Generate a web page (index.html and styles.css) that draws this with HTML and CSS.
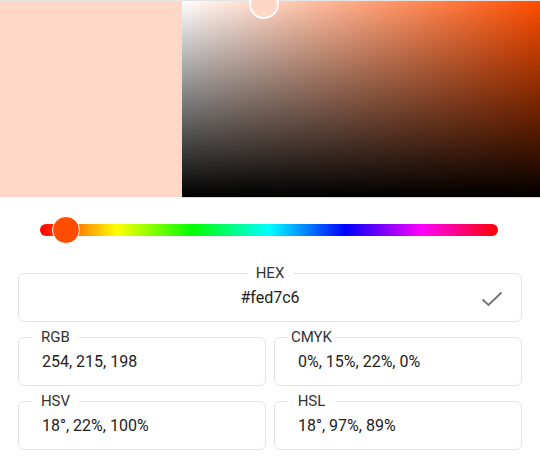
FILE: index.html
```html
<!DOCTYPE html>
<html>
<head>
<meta charset="utf-8">
<link rel="stylesheet" href="styles.css">
</head>
<body>
<div class="picker">
  <div class="preview">
    <div class="swatch"></div>
    <div class="sv">
      <span class="sv-thumb"></span>
    </div>
  </div>
  <div class="hue">
    <div class="hue-track">
      <span class="hue-thumb"></span>
    </div>
  </div>
  <div class="fields">
    <fieldset class="field field-hex">
      <legend><span class="label">HEX</span></legend>
      <div class="hex-row">
        <span></span>
        <span class="value">#fed7c6</span>
        <svg class="check" width="22" height="16" viewBox="0 0 22 16"><polyline points="1.5,8.5 7.5,14 20.5,1.5" fill="none" stroke="#757575" stroke-width="2"/></svg>
      </div>
    </fieldset>
    <fieldset class="field">
      <legend><span class="label">RGB</span></legend>
      <div class="value">254, 215, 198</div>
    </fieldset>
    <fieldset class="field">
      <legend><span class="label">CMYK</span></legend>
      <div class="value">0%, 15%, 22%, 0%</div>
    </fieldset>
    <fieldset class="field">
      <legend><span class="label">HSV</span></legend>
      <div class="value">18°, 22%, 100%</div>
    </fieldset>
    <fieldset class="field">
      <legend><span class="label">HSL</span></legend>
      <div class="value">18°, 97%, 89%</div>
    </fieldset>
  </div>
</div>
</body>
</html>
```

FILE: styles.css
```css
* { box-sizing: border-box; }
html, body { margin: 0; padding: 0; background: #fff; }
body {
  font-family: Roboto, "Liberation Sans", sans-serif;
  color: #222;
  width: 540px;
  height: 471px;
  overflow: hidden;
}
.preview {
  display: flex;
  height: 198px;
  border-top: 1px solid #e4e4e4;
}
.swatch {
  width: 182px;
  background: #fed7c6;
  margin-bottom: 1px;
}
.sv {
  flex: 1;
  position: relative;
  border-bottom: 1px solid #d8d8d8;
  background:
    linear-gradient(to top, #000, rgba(0,0,0,0)),
    linear-gradient(to right, #fff, #ff4d00);
}
.sv-thumb {
  position: absolute;
  left: 67px;
  top: -12px;
  width: 30px;
  height: 30px;
  border-radius: 50%;
  border: 2.5px solid #fff;
  background: #fed7c6;
}
.hue {
  padding: 26px 42px 29px 40px;
}
.hue-track {
  position: relative;
  height: 12px;
  border-radius: 6px;
  background: linear-gradient(to right, #f00, #ff0, #0f0, #0ff, #00f, #f0f, #f00);
}
.hue-thumb {
  position: absolute;
  left: 12px;
  top: -8px;
  width: 28px;
  height: 28px;
  border-radius: 50%;
  background: #ff4d00;
  border: 1.5px solid #fff;
}
.fields {
  display: grid;
  grid-template-columns: 1fr 1fr;
  gap: 7px 8px;
  margin: 0 18px;
}
.field {
  margin: 0;
  min-width: 0;
  padding: 0 0 0 13px;
  border: 1px solid #e3e3e3;
  border-radius: 6px;
}
.field legend {
  padding: 0;
  text-align: left;
  font-size: 15px;
  line-height: 16px;
  color: #333;
}
.label {
  display: block;
  width: 47px;
  text-align: center;
}
.value {
  font-size: 16px;
  line-height: 20px;
  padding: 7px 0 13px 10px;
  color: #222;
}
.field-hex {
  grid-column: 1 / span 2;
  padding: 0 13px;
}
.field-hex legend {
  text-align: center;
}
.hex-row {
  display: grid;
  grid-template-columns: 1fr auto 1fr;
  align-items: center;
  padding: 7px 0 13px;
}
.hex-row .value {
  padding: 0;
}
.check {
  justify-self: end;
  margin-right: 5px;
  margin-top: 1px;
}
```
